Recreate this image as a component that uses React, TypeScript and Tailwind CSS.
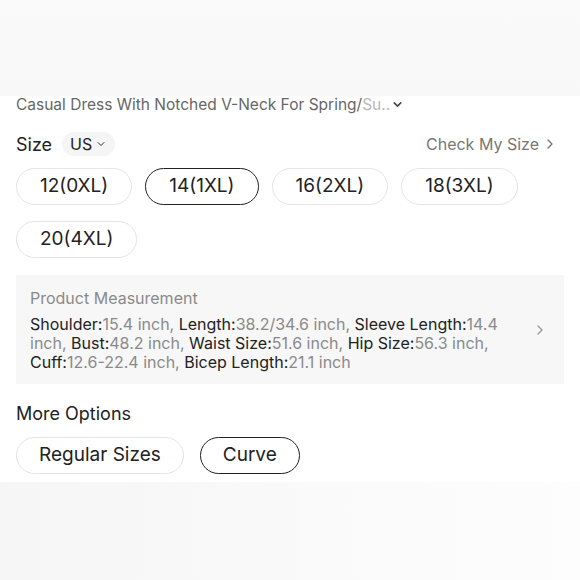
import { ChevronDown, ChevronRight } from "lucide-react";

const sizes = ["12(0XL)", "14(1XL)", "16(2XL)", "18(3XL)", "20(4XL)"];
const selectedSize = "14(1XL)";

const measurements: [string, string][] = [
  ["Shoulder:", "15.4"],
  ["Length:", "38.2/34.6"],
  ["Sleeve Length:", "14.4"],
  ["Bust:", "48.2"],
  ["Waist Size:", "51.6"],
  ["Hip Size:", "56.3"],
  ["Cuff:", "12.6-22.4"],
  ["Bicep Length:", "21.1"],
];

function Pill({ label, selected, tight }: { label: string; selected?: boolean; tight?: boolean }) {
  const border = selected ? "border-[#222]" : "border-[#e4e4e4]";
  const pad = tight ? "px-[22px]" : "px-[23px]";
  return (
    <button className={`h-[37px] ${pad} rounded-full border ${border} text-[19px] text-[#222] bg-white`}>
      {label}
    </button>
  );
}

export default function App() {
  return (
    <div
      className="w-[580px] h-[580px] bg-white flex flex-col overflow-hidden"
      style={{ fontFamily: "Inter, 'Liberation Sans', Arial, sans-serif" }}
    >
      <div className="h-[96px] shrink-0 bg-gradient-to-b from-[#fafafa] to-[#f8f8f8]" />

      <div className="flex-1 px-4 flex flex-col">
        {/* title */}
        <div className="flex items-center h-[17px] text-[15.5px] text-[#666] leading-[17px]">
          <span>Casual Dress With Notched V-Neck For Spring/</span>
          <span className="text-[#b8b8b8]">Su..</span>
          <ChevronDown className="h-[13px] w-[13px] text-[#444] ml-[1px]" strokeWidth={3} />
        </div>

        {/* size header */}
        <div className="flex items-center justify-between mt-[19px] h-[24px]">
          <div className="flex items-center">
            <span className="text-[18px] text-[#222]">Size</span>
            <span className="ml-[10px] h-[24px] px-[8px] rounded-full bg-[#f5f5f5] flex items-center text-[16px] text-[#222]">
              US
              <ChevronDown className="h-[12px] w-[12px] ml-[3px] text-[#333]" strokeWidth={2} />
            </span>
          </div>
          <div className="flex items-center text-[16px] text-[#777] pr-[6px]">
            Check My Size
            <ChevronRight className="h-[16px] w-[16px] ml-[3px] text-[#777]" strokeWidth={2} />
          </div>
        </div>

        {/* sizes */}
        <div className="flex flex-wrap gap-x-[13px] gap-y-[16px] mt-[12px] w-[540px]">
          {sizes.map((s) => (
            <Pill key={s} label={s} selected={s === selectedSize} />
          ))}
        </div>

        {/* measurement */}
        <div className="mt-[17px] bg-[#f7f7f7] pl-[14px] pr-[16px] pt-[13px] pb-[12px] flex items-center">
          <div className="flex-1">
            <div className="text-[16px] leading-[20px] text-[#8a8a8a]">Product Measurement</div>
            <div className="mt-[7px] text-[16px] leading-[19px] w-[492px]">
              {measurements.map(([k, v], i) => (
                <span key={k}>
                  <span className="text-[#222]">{k}</span>
                  <span className="text-[#8a8a8a]">
                    <span className="whitespace-nowrap">{v}</span> inch
                    {i < measurements.length - 1 ? ", " : ""}
                  </span>
                </span>
              ))}
            </div>
          </div>
          <ChevronRight className="h-[16px] w-[16px] text-[#999]" strokeWidth={2} />
        </div>

        {/* more options */}
        <div className="mt-[19px] text-[18px] leading-[22px] text-[#222]">More Options</div>
        <div className="flex gap-[16px] mt-[12px]">
          <Pill label="Regular Sizes" tight />
          <Pill label="Curve" selected tight />
        </div>
      </div>

      <div className="h-[98px] shrink-0 bg-gradient-to-r from-[#f6f6f6] to-[#fdfdfd]" />
    </div>
  );
}
